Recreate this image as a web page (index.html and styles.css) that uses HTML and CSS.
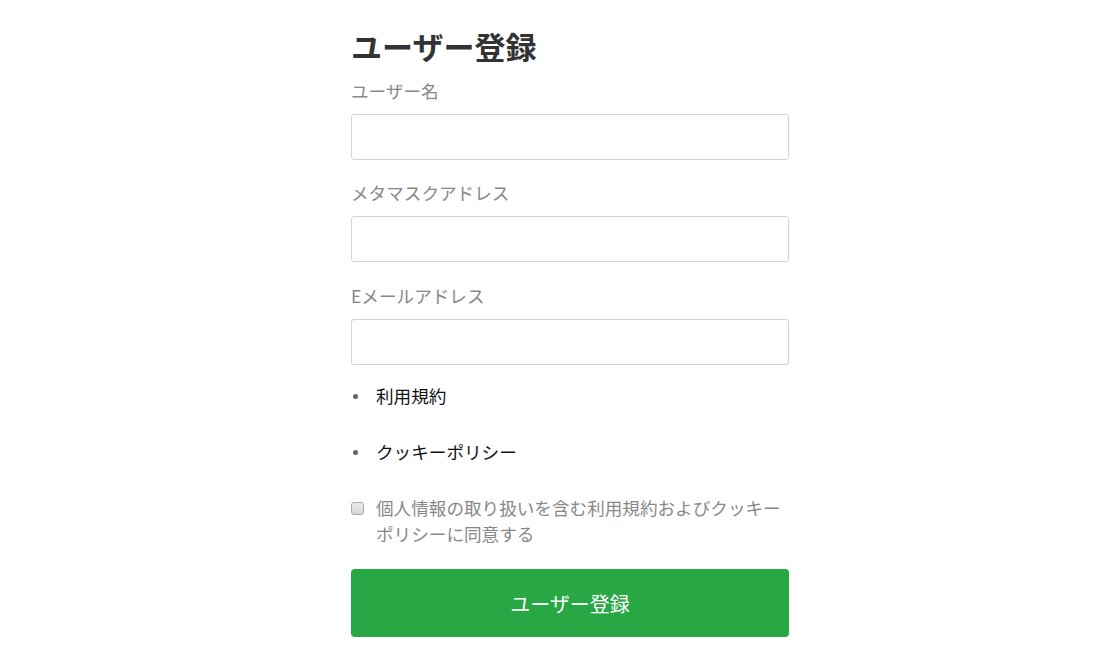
FILE: index.html
```html
<!DOCTYPE html>
<html lang="ja">
<head>
<meta charset="utf-8">
<title>ユーザー登録</title>
<link rel="stylesheet" href="styles.css">
</head>
<body>
<main class="page">
  <h1 class="title">ユーザー登録</h1>
  <form class="form">
    <div class="field">
      <label class="label" for="name">ユーザー名</label>
      <input class="input" id="name" type="text">
    </div>
    <div class="field">
      <label class="label" for="wallet">メタマスクアドレス</label>
      <input class="input" id="wallet" type="text">
    </div>
    <div class="field">
      <label class="label" for="email">Eメールアドレス</label>
      <input class="input" id="email" type="text">
    </div>
    <ul class="links">
      <li class="link-item"><span class="dot"></span><span>利用規約</span></li>
      <li class="link-item"><span class="dot"></span><span>クッキーポリシー</span></li>
    </ul>
    <label class="agree">
      <span class="box"></span>
      <span class="agree-text">個人情報の取り扱いを含む利用規約およびクッキーポリシーに同意する</span>
    </label>
    <button class="submit" type="button">ユーザー登録</button>
  </form>
</main>
</body>
</html>
```

FILE: styles.css
```css
html, body {
  margin: 0;
  padding: 0;
  background: #fff;
}
body {
  font-family: "Noto Sans CJK JP", "Noto Sans", sans-serif;
}
.page {
  width: 438px;
  margin-left: 351px;
  padding-top: 27px;
}
.title {
  margin: 0;
  font-size: 31px;
  line-height: 38px;
  font-weight: 700;
  color: #333;
}
.form {
  display: flex;
  flex-direction: column;
}
.field {
  display: flex;
  flex-direction: column;
  margin-top: 13px;
}
.field + .field {
  margin-top: 20px;
}
.field:nth-child(3) {
  margin-top: 21px;
}
.label {
  font-size: 17.6px;
  line-height: 26px;
  color: #888;
  margin-bottom: 10px;
}
.input {
  box-sizing: border-box;
  height: 46px;
  width: 100%;
  border: 1px solid #ced4da;
  border-radius: 3px;
  background: #fff;
  margin: 0;
}
.links {
  list-style: none;
  margin: 18px 0 0;
  padding: 0;
  display: flex;
  flex-direction: column;
  gap: 30px;
}
.link-item {
  display: flex;
  align-items: center;
  font-size: 17.6px;
  line-height: 26px;
  color: #111;
}
.dot {
  width: 5px;
  height: 5px;
  border-radius: 50%;
  background: #666;
  margin-left: 2px;
  margin-right: 18px;
}
.agree {
  display: flex;
  align-items: flex-start;
  margin-top: 30px;
  font-size: 17.6px;
  line-height: 26px;
  color: #888;
}
.box {
  flex: none;
  box-sizing: border-box;
  width: 13px;
  height: 13px;
  margin-top: 7px;
  margin-right: 12px;
  border: 1px solid #aaa;
  border-radius: 3px;
  background: linear-gradient(#ececec, #d6d6d6);
}
.agree-text {
  flex: 1;
}
.submit {
  margin-top: 22px;
  height: 68px;
  width: 100%;
  border: none;
  border-radius: 4px;
  background: #28a745;
  color: #fff;
  font-family: inherit;
  font-size: 20px;
}
```
